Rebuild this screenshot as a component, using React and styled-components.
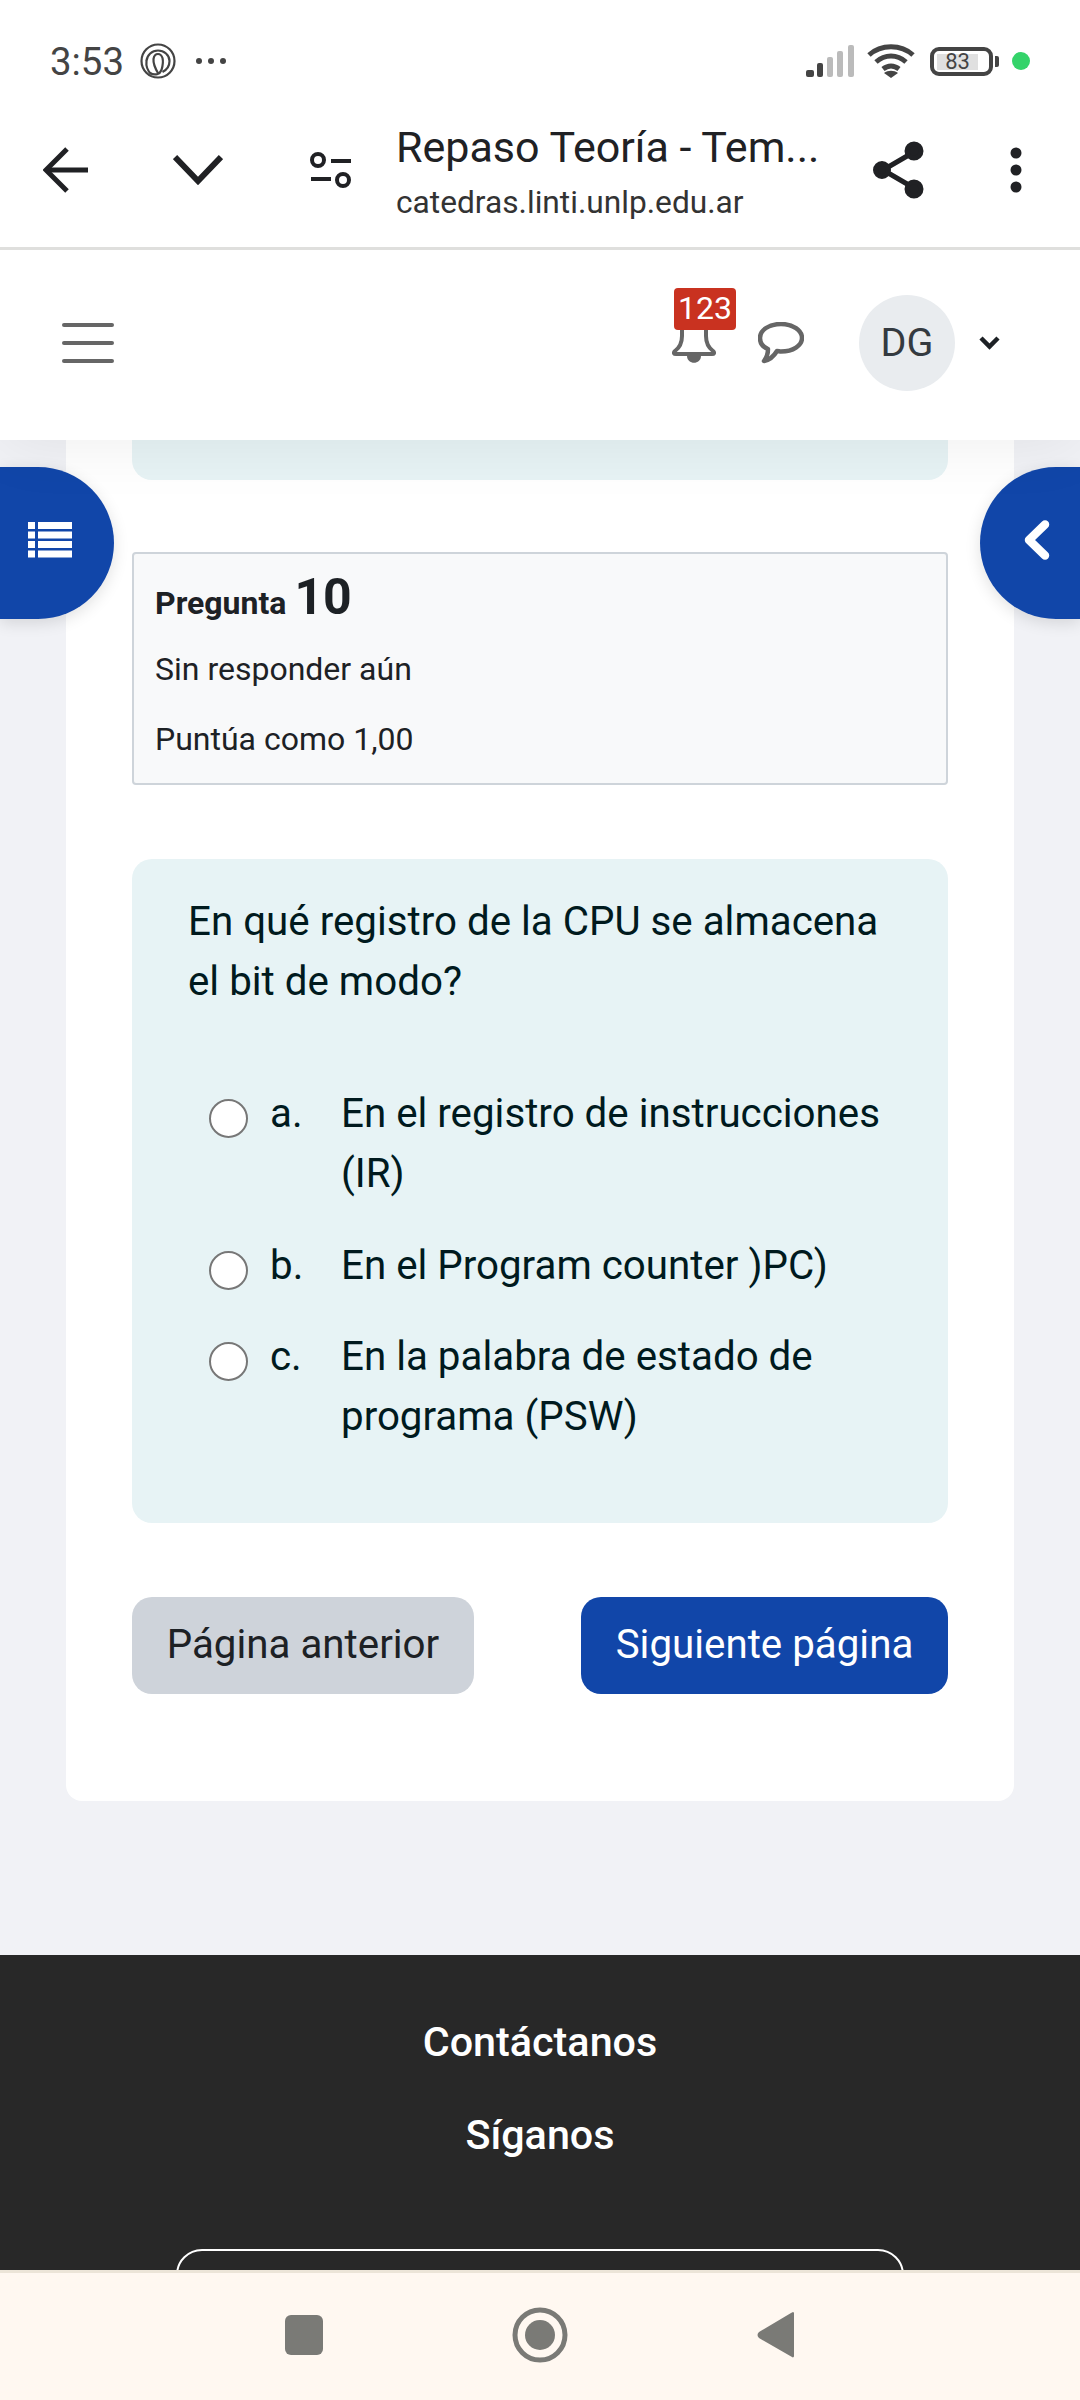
import React from "react";
import styled, { createGlobalStyle } from "styled-components";

const Global = createGlobalStyle`
  html, body { margin: 0; padding: 0; background: #f1f2f6; }
  * { box-sizing: border-box; }
  body { font-family: Roboto, "Liberation Sans", sans-serif; }
`;

const Screen = styled.div`
  width: 1080px; height: 2400px; overflow: hidden;
  display: flex; flex-direction: column; position: relative; background: #f1f2f6;
`;

const StatusBar = styled.div`
  height: 100px; flex: none; background: #fff; display: flex; align-items: center;
  padding: 22px 0 0 50px; position: relative; z-index: 3;
`;
const Time = styled.span`
  font-size: 38.4px; color: #444; width: 90px; letter-spacing: 0; line-height: 40px; padding-top: 2px;
`;
const Spacer = styled.div`flex: 1;`;
const StatusIcons = styled.div`
  display: flex; align-items: center;
`;
const Svg = styled.svg`
  display: block; flex: none;
  margin-left: ${p => p.$ml || 0}px;
`;
const Battery = styled.div`
  position: relative; width: 63px; height: 29px; margin-left: 15px; flex: none;
  border: 4px solid #444; border-radius: 9px; padding: 3px 11px 2px 3px;
  display: flex;
  &::after {
    content: ""; position: absolute; right: -10px; top: 5px; width: 4px; height: 11px;
    background: #444; border-radius: 0 2px 2px 0;
  }
`;
const BatteryFill = styled.div`
  flex: 1; background: #e0e0e0; display: flex; align-items: center; justify-content: center;
  font-size: 22px; color: #444; line-height: 18px; padding-top: 1px;
`;
const GreenDot = styled.div`
  width: 18px; height: 18px; border-radius: 50%; background: #34d36a; margin-left: 19px; margin-right: 50px;
`;

const Toolbar = styled.div`
  height: 150px; flex: none; background: #fff; border-bottom: 3px solid #dfdfdd;
  display: flex; align-items: center; position: relative; z-index: 3; padding-bottom: 7px;
`;
const ToolSlot = styled.div`
  flex: none; display: flex; justify-content: center; align-items: center;
  width: ${p => p.$w}px; margin-left: ${p => p.$ml || 0}px;
`;
const TitleBlock = styled.div`
  flex: none; width: 441px; margin-left: 44px; display: flex; flex-direction: column; padding-top: 6px;
`;
const PageTitle = styled.div`
  font-size: 43px; line-height: 52px; color: #202124; white-space: nowrap;
`;
const PageUrl = styled.div`
  font-size: 31.7px; line-height: 44px; color: #333; margin-top: 8px; white-space: nowrap;
`;

const Header = styled.header`
  height: 190px; flex: none; background: #fff; position: relative; z-index: 2;
  display: flex; align-items: center; padding: 0 80px 4px 62px;
  box-shadow: 0 4px 60px rgba(0, 0, 0, 0.07);
`;
const Burger = styled.div`
  width: 52px; display: flex; flex-direction: column; gap: 14px;
`;
const BurgerLine = styled.div`height: 4px; background: #666; border-radius: 2px;`;
const BellWrap = styled.div`
  position: relative; width: 44px; height: 44px; margin-top: 2px;
`;
const Badge = styled.div`
  position: absolute; left: 2px; top: -34px; width: 62px; height: 42px;
  background: #c93220; color: #fff; border-radius: 4px; font-size: 32px; line-height: 40px; text-align: center;
`;
const Avatar = styled.div`
  width: 96px; height: 96px; border-radius: 50%; background: #e9ecef; color: #343a40;
  font-size: 39.5px; display: flex; align-items: center; justify-content: center; margin-left: 55px;
  padding-bottom: 2px;
`;

const Main = styled.main`
  height: 1515px; flex: none; padding: 0 66px; position: relative;
`;
const Card = styled.section`
  height: 1361px; background: #fff; border-radius: 0 0 16px 16px; padding: 0 66px;
  display: flex; flex-direction: column;
`;
const PrevBlock = styled.div`
  height: 40px; flex: none; background: #e7f3f5; border-radius: 0 0 20px 20px;
`;
const InfoBox = styled.div`
  height: 233px; flex: none; margin-top: 72px; background: #f8f9fa; border: 2px solid #ced4da;
  border-radius: 4px; padding: 15px 21px 0;
  color: #1d2125;
`;
const QNumberLine = styled.div`
  font-weight: 700; font-size: 32px; line-height: 56px; height: 56px;
`;
const QNumber = styled.span`font-size: 50px;`;
const InfoLine = styled.div`
  font-size: 32px; line-height: 46px; margin-top: ${p => p.$mt}px;
`;
const Formulation = styled.div`
  height: 664px; flex: none; margin-top: 74px; background: #e7f3f5; border-radius: 20px;
  padding: 33px 56px 0; color: #001a1e;
`;
const QText = styled.div`
  font-size: 40.3px; line-height: 60px; margin-bottom: 72px;
`;
const Answers = styled.div`display: flex; flex-direction: column; gap: 31.5px;`;
const Answer = styled.div`
  display: flex; align-items: flex-start; padding-left: 21px;
`;
const Radio = styled.div`
  width: 39px; height: 39px; border-radius: 50%; background: #fff; border: 2.5px solid #777;
  flex: none; margin-top: 15px;
`;
const AnswerLetter = styled.div`
  width: 71px; margin-left: 22px; flex: none; font-size: 40.3px; line-height: 60px;
`;
const AnswerText = styled.div`
  font-size: 40.3px; line-height: 60px; flex: 1;
`;
const Buttons = styled.div`
  display: flex; justify-content: space-between; margin-top: 74px;
`;
const Button = styled.button`
  height: 97px; width: ${p => p.$w}px; border: 0; border-radius: 20px; font-family: inherit;
  font-size: 40.3px; background: ${p => p.$primary ? "#1146a9" : "#ced3da"}; color: ${p => p.$primary ? "#fff" : "#1d2125"};
  padding: 0 0 2px;
`;

const SideTab = styled.div`
  position: absolute; top: 27px; width: ${p => p.$w}px; height: 152px; background: #1146a9; z-index: 1;
  ${p => p.$right ? "right: 0; border-radius: 76px 0 0 76px;" : "left: 0; border-radius: 0 76px 76px 0;"}
  box-shadow: 0 4px 16px rgba(0,0,0,.12);
  display: flex; align-items: center;
  padding: 0 0 7px ${p => p.$pl}px;
`;

const Footer = styled.footer`
  height: 315px; flex: none; background: #282828; color: #fff; display: flex; flex-direction: column;
  align-items: center; overflow: hidden;
`;
const FooterLink = styled.div`
  font-size: 41.3px; font-weight: 500; line-height: 60px; margin-top: ${p => p.$mt}px;
`;
const FooterBox = styled.div`
  width: 728px; height: 120px; border: 2px solid #fff; border-radius: 26px; flex: none; margin-top: 84px;
`;

const NavBar = styled.nav`
  height: 130px; flex: none; background: #fff8f1; border-top: 3px solid #ece5d8;
  display: flex; align-items: center; justify-content: center; padding-bottom: 3px;
`;
const NavSlot = styled.div`
  width: ${p => p.$w}px; display: flex; justify-content: center;
`;

const Spiral = () => (
  <Svg $ml={0} width="36" height="36" viewBox="0 0 36 36" fill="none" stroke="#444" strokeWidth="2.2">
    <circle cx="18" cy="18" r="16.5" />
    <path d="M11 31C7 27 6 22 6.500 18 7 12 12 7.500 18 7.500S29.500 12 29.500 18c0 5-3 9-7 11" />
    <path d="M10 30c5 3 10 1 11.500-3 1.500-5 2-8 1-12-1-3-3-4-4.500-4-2 0-4 2-4.500 5-.5 5 2 10 5 15" />
  </Svg>
);

const Signal = () => (
  <Svg width="50" height="32" viewBox="0 0 50 32">
    <rect x="1" y="25" width="8" height="7" rx="2" fill="#444" />
    <rect x="12" y="18" width="6" height="14" rx="2" fill="#444" />
    <rect x="22" y="12" width="6" height="20" rx="2" fill="#bbb" />
    <rect x="32" y="6" width="6" height="26" rx="2" fill="#bbb" />
    <rect x="43" y="0" width="6" height="32" rx="2" fill="#bbb" />
  </Svg>
);

const Wifi = () => (
  <Svg $ml={12} width="48" height="34" viewBox="0 0 48 34" fill="none" stroke="#444" strokeWidth="5">
    <path d="M2 11C14 0 34 0 46 11" />
    <path d="M9 18c9-8 21-8 30 0" />
    <path d="M16 25c5-4 11-4 16 0" />
    <path d="M24 34l-7-5c4-3 10-3 14 0z" fill="#444" stroke="none" />
  </Svg>
);

export default function App() {
  return (
    <Screen>
      <Global />
      <StatusBar>
        <Time>3:53</Time>
        <Spiral />
        <Svg $ml={19} width="32" height="8" viewBox="0 0 32 8" fill="#444">
          <circle cx="4" cy="4" r="3" /><circle cx="16" cy="4" r="3" /><circle cx="28" cy="4" r="3" />
        </Svg>
        <Spacer />
        <StatusIcons>
          <Signal />
          <Wifi />
          <Battery><BatteryFill>83</BatteryFill></Battery>
          <GreenDot />
        </StatusIcons>
      </StatusBar>

      <Toolbar>
        <ToolSlot $w={44} $ml={44}>
          <Svg width="46" height="46" viewBox="0 0 46 46" fill="none" stroke="#202124" strokeWidth="5">
            <path d="M45 23H4" /><path d="M24 2L3 23l21 21" />
          </Svg>
        </ToolSlot>
        <ToolSlot $w={50} $ml={85}>
          <Svg width="50" height="32" viewBox="0 0 50 32" fill="none" stroke="#202124" strokeWidth="6">
            <path d="M2 3l23 24L48 3" />
          </Svg>
        </ToolSlot>
        <ToolSlot $w={42} $ml={87}>
          <Svg width="42" height="36" viewBox="0 0 42 36" fill="none" stroke="#202124" strokeWidth="4">
            <circle cx="8" cy="8" r="6" /><path d="M21 9h20" />
            <path d="M1 27h20" /><circle cx="33" cy="28" r="6" />
          </Svg>
        </ToolSlot>
        <TitleBlock>
          <PageTitle>Repaso Teoría - Tem...</PageTitle>
          <PageUrl>catedras.linti.unlp.edu.ar</PageUrl>
        </TitleBlock>
        <ToolSlot $w={52} $ml={36}>
          <Svg width="52" height="58" viewBox="0 0 52 58" fill="#202124" stroke="#202124" strokeWidth="5">
            <path d="M41 11L10 29l31 18" fill="none" />
            <circle cx="41" cy="10" r="7" /><circle cx="9" cy="29" r="6.500" /><circle cx="41" cy="48" r="7" />
          </Svg>
        </ToolSlot>
        <ToolSlot $w={14} $ml={84}>
          <Svg width="14" height="46" viewBox="0 0 14 46" fill="#202124">
            <circle cx="7" cy="6" r="5.500" /><circle cx="7" cy="23" r="5.500" /><circle cx="7" cy="40" r="5.500" />
          </Svg>
        </ToolSlot>
      </Toolbar>

      <Header>
        <Burger><BurgerLine /><BurgerLine /><BurgerLine /></Burger>
        <Spacer />
        <BellWrap>
          <Svg width="44" height="44" viewBox="0 0 44 44" fill="none" stroke="#666" strokeWidth="4">
            <path d="M10 0v14c0 8-3 12-7 15-2 2-1 3 1 3h36c2 0 3-1 1-3-4-3-7-7-7-15V0" strokeLinejoin="round" />
            <path d="M15 34c0 9 14 9 14 0z" fill="#666" stroke="none" />
          </Svg>
          <Badge>123</Badge>
        </BellWrap>
        <ToolSlot $w={46} $ml={42}>
          <Svg width="46" height="42" viewBox="0 0 46 42" fill="none" stroke="#666" strokeWidth="4.500" strokeLinejoin="round">
            <path d="M23 2C11 2 2 8 2 16c0 5 3 9 8 11 0 4-1 8-4 12 5-1 10-5 13-10 1 0 3 .5 4 .5 12 0 21-6 21-13.500S35 2 23 2z" />
          </Svg>
        </ToolSlot>
        <Avatar>DG</Avatar>
        <ToolSlot $w={21} $ml={24}>
          <Svg width="21" height="14" viewBox="0 0 21 14" fill="none" stroke="#1d2125" strokeWidth="4.500">
            <path d="M2 2l8.500 8.500L19 2" />
          </Svg>
        </ToolSlot>
      </Header>

      <Main>
        <SideTab $w={114} $pl={28}>
          <Svg width="44" height="36" viewBox="0 0 44 36" fill="#fff">
            <rect x="0" y="0" width="7" height="7" /><rect x="10" y="0" width="34" height="7" />
            <rect x="0" y="9.500" width="7" height="7" /><rect x="10" y="9.500" width="34" height="7" />
            <rect x="0" y="19" width="7" height="7" /><rect x="10" y="19" width="34" height="7" />
            <rect x="0" y="28.500" width="7" height="7" /><rect x="10" y="28.500" width="34" height="7" />
          </Svg>
        </SideTab>
        <SideTab $right $w={100} $pl={44}>
          <Svg width="26" height="40" viewBox="0 0 26 40" fill="none" stroke="#fff" strokeWidth="8.500" strokeLinecap="round" strokeLinejoin="round">
            <path d="M21 4.500L5 20l16 15.500" />
          </Svg>
        </SideTab>
        <Card>
          <PrevBlock />
          <InfoBox>
            <QNumberLine>Pregunta <QNumber>10</QNumber></QNumberLine>
            <InfoLine $mt={21}>Sin responder aún</InfoLine>
            <InfoLine $mt={24}>Puntúa como 1,00</InfoLine>
          </InfoBox>
          <Formulation>
            <QText>En qué registro de la CPU se almacena el bit de modo?</QText>
            <Answers>
              <Answer>
                <Radio />
                <AnswerLetter>a.</AnswerLetter>
                <AnswerText>En el registro de instrucciones (IR)</AnswerText>
              </Answer>
              <Answer>
                <Radio />
                <AnswerLetter>b.</AnswerLetter>
                <AnswerText>En el Program counter )PC)</AnswerText>
              </Answer>
              <Answer>
                <Radio />
                <AnswerLetter>c.</AnswerLetter>
                <AnswerText>En la palabra de estado de programa (PSW)</AnswerText>
              </Answer>
            </Answers>
          </Formulation>
          <Buttons>
            <Button $w={342}>Página anterior</Button>
            <Button $w={367} $primary>Siguiente página</Button>
          </Buttons>
        </Card>
      </Main>

      <Footer>
        <FooterLink $mt={57}>Contáctanos</FooterLink>
        <FooterLink $mt={33}>Síganos</FooterLink>
        <FooterBox />
      </Footer>

      <NavBar>
        <NavSlot $w={236}>
          <Svg width="40" height="40" viewBox="0 0 40 40"><rect x="1" y="0" width="38" height="40" rx="6" fill="#7a7a76" /></Svg>
        </NavSlot>
        <NavSlot $w={236}>
          <Svg width="56" height="56" viewBox="0 0 56 56" fill="none">
            <circle cx="28" cy="28" r="25" stroke="#7a7a76" strokeWidth="5" />
            <circle cx="28" cy="28" r="15" fill="#7a7a76" />
          </Svg>
        </NavSlot>
        <NavSlot $w={236}>
          <Svg width="38" height="48" viewBox="0 0 38 48"><path d="M36 1c1 0 1 1 1 2v42c0 1-1 2-2 1L2 27c-2-2-2-4 0-6L34 2z" fill="#7a7a76" /></Svg>
        </NavSlot>
      </NavBar>
    </Screen>
  );
}
